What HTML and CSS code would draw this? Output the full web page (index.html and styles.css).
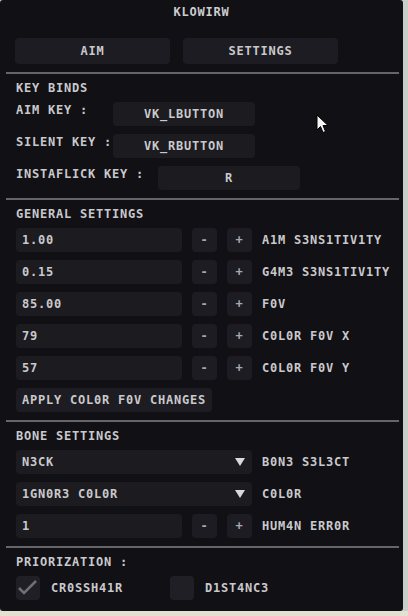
FILE: index.html
```html
<!DOCTYPE html>
<html lang="en">
<head>
  <meta charset="UTF-8">
  <meta name="viewport" content="width=device-width, initial-scale=1.0">
  <title>KLOWIRW</title>
  <link rel="stylesheet" href="styles.css">
</head>
<body>
  <div class="window">
    <div class="title">KLOWIRW</div>

    <!-- Tabs -->
    <div class="tabs">
      <div class="btn tab">AIM</div>
      <div class="btn tab">SETTINGS</div>
    </div>
    <div class="sep"></div>

    <!-- Key binds -->
    <div class="section">
      <div class="header">KEY BINDS</div>
      <div class="row top">
        <span class="key-label">AIM KEY :</span>
        <div class="frame key">VK_LBUTTON</div>
      </div>
      <div class="row top">
        <span class="key-label">SILENT KEY :</span>
        <div class="frame key">VK_RBUTTON</div>
      </div>
      <div class="row top">
        <span class="key-label wide">INSTAFLICK KEY :</span>
        <div class="frame key">R</div>
      </div>
    </div>
    <div class="sep"></div>

    <!-- General settings -->
    <div class="section">
      <div class="header">GENERAL SETTINGS</div>
      <div class="row">
        <div class="frame input">1.00</div>
        <div class="btn step">-</div>
        <div class="btn step">+</div>
        <span class="label">A1M S3NS1TIV1TY</span>
      </div>
      <div class="row">
        <div class="frame input">0.15</div>
        <div class="btn step">-</div>
        <div class="btn step">+</div>
        <span class="label">G4M3 S3NS1TIV1TY</span>
      </div>
      <div class="row">
        <div class="frame input">85.00</div>
        <div class="btn step">-</div>
        <div class="btn step">+</div>
        <span class="label">F0V</span>
      </div>
      <div class="row">
        <div class="frame input">79</div>
        <div class="btn step">-</div>
        <div class="btn step">+</div>
        <span class="label">C0L0R F0V X</span>
      </div>
      <div class="row">
        <div class="frame input">57</div>
        <div class="btn step">-</div>
        <div class="btn step">+</div>
        <span class="label">C0L0R F0V Y</span>
      </div>
      <div class="row">
        <div class="btn apply">APPLY COL0R F0V CHANGES</div>
      </div>
    </div>
    <div class="sep"></div>

    <!-- Bone settings -->
    <div class="section">
      <div class="header">BONE SETTINGS</div>
      <div class="row">
        <div class="frame combo">N3CK<span class="arrow"></span></div>
        <span class="label">B0N3 S3L3CT</span>
      </div>
      <div class="row">
        <div class="frame combo">1GN0R3 C0L0R<span class="arrow"></span></div>
        <span class="label">C0L0R</span>
      </div>
      <div class="row">
        <div class="frame input">1</div>
        <div class="btn step">-</div>
        <div class="btn step">+</div>
        <span class="label">HUM4N ERR0R</span>
      </div>
    </div>
    <div class="sep"></div>

    <!-- Priorization -->
    <div class="section">
      <div class="header">PRIORIZATION :</div>
      <div class="row">
        <div class="check-item">
          <div class="checkbox">
            <svg width="24" height="24" viewBox="0 0 24 24"><polyline points="3,12 8,17 20,5" fill="none" stroke="#6f6f73" stroke-width="2.5"/></svg>
          </div>
          <span class="label">CR0SSH41R</span>
        </div>
        <div class="check-item">
          <div class="checkbox"></div>
          <span class="label">D1ST4NC3</span>
        </div>
      </div>
    </div>

    <svg class="cursor" width="14" height="20" viewBox="0 0 14 20">
      <path d="M1 1 L1 16 L4.5 12.5 L7 18.5 L9.5 17.5 L7 11.5 L12 11.5 Z" fill="#f4f4f4" stroke="#000" stroke-width="1"/>
    </svg>
  </div>
</body>
</html>
```

FILE: styles.css
```css
body {
  margin: 0;
  height: 616px;
  background: linear-gradient(to bottom, #c6cfc9 611px, #e4e0d2 611px);
  font-family: "DejaVu Sans Mono", monospace;
  font-size: 12px;
  font-weight: bold;
  letter-spacing: 0.78px;
  color: #c9c9cc;
  white-space: nowrap;
}

.window {
  position: relative;
  width: 403px;
  height: 611px;
  background-color: #111014;
  border-radius: 3px;
  overflow: hidden;
}

.title {
  height: 24px;
  line-height: 24px;
  text-align: center;
  color: #cdcdd0;
}

.tabs {
  display: flex;
  gap: 13px;
  margin-top: 14px;
  padding-left: 15px;
}

.btn {
  background-color: #1d1c22;
  border-radius: 4px;
  display: flex;
  align-items: center;
  justify-content: center;
  flex-shrink: 0;
}

.tab {
  width: 155px;
  height: 26px;
}

.sep {
  height: 2px;
  margin: 8px 4px 0 6px;
  background-color: #66666a;
}

.section {
  display: flex;
  flex-direction: column;
  gap: 8px;
  padding: 6px 16px 0;
}

.header {
  height: 16px;
  line-height: 16px;
  margin-bottom: -2px;
}

.row {
  display: flex;
  align-items: center;
  height: 24px;
}

.row.top {
  align-items: flex-start;
}

.key-label {
  width: 97px;
  line-height: 16px;
  flex-shrink: 0;
}

.key-label.wide {
  width: 142px;
}

.frame {
  height: 24px;
  background-color: #1c1b20;
  border-radius: 4px;
  display: flex;
  align-items: center;
  box-sizing: border-box;
  flex-shrink: 0;
}

.key {
  width: 142px;
  justify-content: center;
}

.input {
  width: 166px;
  padding-left: 6px;
}

.step {
  width: 25px;
  height: 24px;
  margin-left: 10px;
  color: #a9a9ad;
}

.label {
  margin-left: 10px;
}

.apply {
  height: 24px;
  padding: 0 6px;
}

.combo {
  width: 236px;
  padding: 0 7px 0 6px;
  justify-content: space-between;
}

.arrow {
  width: 0;
  height: 0;
  border-left: 5px solid transparent;
  border-right: 5px solid transparent;
  border-top: 8px solid #dadadc;
}

.check-item {
  display: flex;
  align-items: center;
  width: 154px;
}

.checkbox {
  width: 24px;
  height: 24px;
  background-color: #201f25;
  border-radius: 4px;
  flex-shrink: 0;
}

.check-item .label {
  margin-left: 11px;
}

.cursor {
  position: absolute;
  left: 316px;
  top: 114px;
}
```
